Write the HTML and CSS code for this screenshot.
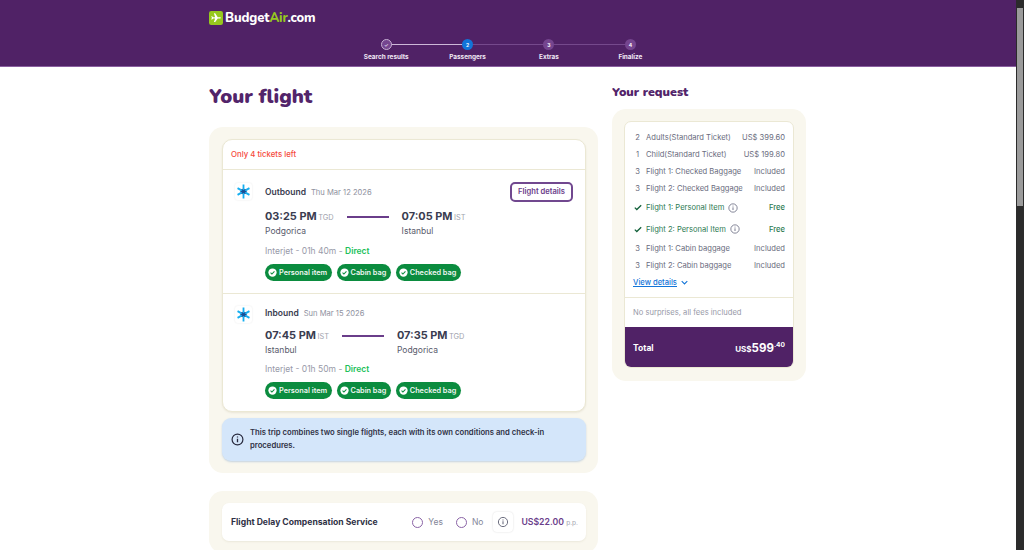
FILE: index.html
```html
<!DOCTYPE html>
<html lang="en">
<head>
   <meta charset="UTF-8">
   <meta name="viewport" content="width=device-width, initial-scale=1.0">
   <title>Your flight</title>
   <link rel="stylesheet" href="styles.css">
</head>
<body>
   <header class="topbar">
      <div class="topbar-inner">
         <div class="logo">
            <svg class="logo-mark" viewBox="0 0 16 16" aria-hidden="true">
               <rect width="16" height="16" rx="2.5" fill="#96c81e"/>
               <path d="M2.5 7l1 0 1.3 1L7 8 5.6 3.6h1.5L10 8h2.6c.7 0 1 .4 1 .8s-.3.8-1 .8H10l-2.9 4H5.6L7 9.6l-2.2 0-1.3 1h-1l.8-1.8z" fill="#fff" transform="translate(0 -1)"/>
            </svg>
            <span>Budget<em>Air</em>.com</span>
         </div>
         <ol class="steps">
            <li class="step done"><span class="dot">&#10003;</span>Search results</li>
            <li class="step current"><span class="dot">2</span>Passengers</li>
            <li class="step"><span class="dot">3</span>Extras</li>
            <li class="step"><span class="dot">4</span>Finalize</li>
         </ol>
      </div>
   </header>

   <main class="page">
      <section class="left-col">
         <h1>Your flight</h1>
         <div class="panel">
            <div class="flight-card">
               <p class="tickets-left">Only 4 tickets left</p>

               <div class="leg">
                  <div class="airline-logo">
                     <svg viewBox="0 0 16 16" aria-hidden="true">
                        <path d="M8 1.5v13M2.4 4.8l11.2 6.4M13.6 4.8L2.4 11.2" stroke="#14aef0" stroke-width="1.7" fill="none"/>
                        <path d="M5 8h6M6.3 5.8l3.4 4.4M9.7 5.8l-3.4 4.4" stroke="#1a4f96" stroke-width="1.1" fill="none"/>
                     </svg>
                  </div>
                  <div class="leg-body">
                     <div class="leg-head"><b>Outbound</b><span>Thu Mar 12 2026</span></div>
                     <div class="times">
                        <div class="stop">
                           <div class="time">03:25 PM <small>TGD</small></div>
                           <div class="city">Podgorica</div>
                        </div>
                        <div class="route-line"></div>
                        <div class="stop">
                           <div class="time">07:05 PM <small>IST</small></div>
                           <div class="city">Istanbul</div>
                        </div>
                     </div>
                     <p class="carrier">Interjet - 01h 40m - <b>Direct</b></p>
                     <div class="bags">
                        <span class="bag"><svg viewBox="0 0 12 12"><circle cx="6" cy="6" r="5.5" fill="#fff"/><path d="M3.4 6.2l1.8 1.8 3.4-3.6" stroke="#0b8c3f" stroke-width="1.4" fill="none"/></svg>Personal item</span>
                        <span class="bag"><svg viewBox="0 0 12 12"><circle cx="6" cy="6" r="5.5" fill="#fff"/><path d="M3.4 6.2l1.8 1.8 3.4-3.6" stroke="#0b8c3f" stroke-width="1.4" fill="none"/></svg>Cabin bag</span>
                        <span class="bag"><svg viewBox="0 0 12 12"><circle cx="6" cy="6" r="5.5" fill="#fff"/><path d="M3.4 6.2l1.8 1.8 3.4-3.6" stroke="#0b8c3f" stroke-width="1.4" fill="none"/></svg>Checked bag</span>
                     </div>
                  </div>
                  <a class="details-btn" href="#">Flight details</a>
               </div>

               <div class="leg leg-last">
                  <div class="airline-logo">
                     <svg viewBox="0 0 16 16" aria-hidden="true">
                        <path d="M8 1.5v13M2.4 4.8l11.2 6.4M13.6 4.8L2.4 11.2" stroke="#14aef0" stroke-width="1.7" fill="none"/>
                        <path d="M5 8h6M6.3 5.8l3.4 4.4M9.7 5.8l-3.4 4.4" stroke="#1a4f96" stroke-width="1.1" fill="none"/>
                     </svg>
                  </div>
                  <div class="leg-body">
                     <div class="leg-head"><b>Inbound</b><span>Sun Mar 15 2026</span></div>
                     <div class="times">
                        <div class="stop">
                           <div class="time">07:45 PM <small>IST</small></div>
                           <div class="city">Istanbul</div>
                        </div>
                        <div class="route-line"></div>
                        <div class="stop">
                           <div class="time">07:35 PM <small>TGD</small></div>
                           <div class="city">Podgorica</div>
                        </div>
                     </div>
                     <p class="carrier">Interjet - 01h 50m - <b>Direct</b></p>
                     <div class="bags">
                        <span class="bag"><svg viewBox="0 0 12 12"><circle cx="6" cy="6" r="5.5" fill="#fff"/><path d="M3.4 6.2l1.8 1.8 3.4-3.6" stroke="#0b8c3f" stroke-width="1.4" fill="none"/></svg>Personal item</span>
                        <span class="bag"><svg viewBox="0 0 12 12"><circle cx="6" cy="6" r="5.5" fill="#fff"/><path d="M3.4 6.2l1.8 1.8 3.4-3.6" stroke="#0b8c3f" stroke-width="1.4" fill="none"/></svg>Cabin bag</span>
                        <span class="bag"><svg viewBox="0 0 12 12"><circle cx="6" cy="6" r="5.5" fill="#fff"/><path d="M3.4 6.2l1.8 1.8 3.4-3.6" stroke="#0b8c3f" stroke-width="1.4" fill="none"/></svg>Checked bag</span>
                     </div>
                  </div>
               </div>
            </div>

            <div class="notice">
               <svg class="info-dark" viewBox="0 0 12 12"><circle cx="6" cy="6" r="5" fill="none" stroke="#27293d" stroke-width="1.1"/><path d="M6 5.2v3.4M6 3.2v1" stroke="#27293d" stroke-width="1.2"/></svg>
               <p>This trip combines two single flights, each with its own conditions and check-in procedures.</p>
            </div>
         </div>

         <div class="panel panel-service">
            <div class="service">
               <b class="service-name">Flight Delay Compensation Service</b>
               <label class="radio"><i></i>Yes</label>
               <label class="radio"><i></i>No</label>
               <span class="info-tile"><svg viewBox="0 0 12 12"><circle cx="6" cy="6" r="4.6" fill="none" stroke="#6d6f80" stroke-width="1"/><path d="M6 5.2v3M6 3.4v1" stroke="#6d6f80" stroke-width="1.1"/></svg></span>
               <span class="service-price">US$22.00 <small>p.p.</small></span>
            </div>
         </div>
      </section>

      <aside class="right-col">
         <h2>Your request</h2>
         <div class="panel panel-request">
            <div class="request-card">
               <ul class="lines">
                  <li><span class="qty">2</span><span class="what">Adults(Standard Ticket)</span><span class="amt">US$ 399.60</span></li>
                  <li><span class="qty">1</span><span class="what">Child(Standard Ticket)</span><span class="amt">US$ 199.80</span></li>
                  <li><span class="qty">3</span><span class="what">Flight 1: Checked Baggage</span><span class="amt">Included</span></li>
                  <li><span class="qty">3</span><span class="what">Flight 2: Checked Baggage</span><span class="amt">Included</span></li>
                  <li class="free"><span class="qty"><svg viewBox="0 0 10 8"><path d="M1 4.2l2.5 2.4L9 1.2" stroke="#12603a" stroke-width="1.6" fill="none"/></svg></span><span class="what">Flight 1: Personal Item<svg class="info-sm" viewBox="0 0 12 12"><circle cx="6" cy="6" r="5" fill="none" stroke="#5d5f78" stroke-width=".9"/><path d="M6 5.2v3.2M6 3.2v1" stroke="#5d5f78" stroke-width="1"/></svg></span><span class="amt">Free</span></li>
                  <li class="free"><span class="qty"><svg viewBox="0 0 10 8"><path d="M1 4.2l2.5 2.4L9 1.2" stroke="#12603a" stroke-width="1.6" fill="none"/></svg></span><span class="what">Flight 2: Personal Item<svg class="info-sm" viewBox="0 0 12 12"><circle cx="6" cy="6" r="5" fill="none" stroke="#5d5f78" stroke-width=".9"/><path d="M6 5.2v3.2M6 3.2v1" stroke="#5d5f78" stroke-width="1"/></svg></span><span class="amt">Free</span></li>
                  <li><span class="qty">3</span><span class="what">Flight 1: Cabin baggage</span><span class="amt">Included</span></li>
                  <li><span class="qty">3</span><span class="what">Flight 2: Cabin baggage</span><span class="amt">Included</span></li>
               </ul>
               <a class="view-details" href="#"><u>View details</u><svg viewBox="0 0 10 6"><path d="M1 1l4 4 4-4" stroke="#1274d8" stroke-width="1.5" fill="none"/></svg></a>
               <p class="no-surprises">No surprises, all fees included</p>
               <div class="total">
                  <b>Total</b>
                  <span class="total-price"><small>US$</small>599<sup>.40</sup></span>
               </div>
            </div>
         </div>
      </aside>
   </main>

   <div class="scrollbar"><div class="scroll-thumb"></div></div>
</body>
</html>
```

FILE: styles.css
```css
* {
   box-sizing: border-box;
}
html, body {
   height: 550px;
   overflow: hidden;
}
body {
   margin: 0;
   font-family: 'Inter', 'Liberation Sans', sans-serif;
   background-color: #fff;
   color: #27293d;
}
p, h1, h2, ul, ol {
   margin: 0;
   padding: 0;
}
ul, ol {
   list-style: none;
}

/* Header */
.topbar {
   height: 67px;
   background-color: #502266;
   border-bottom: 1px solid #8a5fa0;
}
.topbar-inner {
   width: 597px;
   margin-left: 209px;
   padding-top: 10px;
}
.logo {
   display: flex;
   align-items: center;
   gap: 2px;
   height: 15px;
   font-family: 'Nunito', 'Lato', sans-serif;
   font-weight: 800;
   font-size: 13px;
   letter-spacing: -0.1px;
   color: #fff;
}
.logo em {
   font-style: normal;
   color: #96c81e;
}
.logo-mark {
   width: 14px;
   height: 14px;
}
.steps {
   display: grid;
   grid-template-columns: repeat(4, 81.4px);
   margin: 14px 0 0 136.5px;
}
.step {
   position: relative;
   display: flex;
   flex-direction: column;
   align-items: center;
   gap: 3px;
   font-size: 6.4px;
   font-weight: 700;
   color: #f1e9f5;
   white-space: nowrap;
}
.step:not(:last-child)::after {
   content: "";
   position: absolute;
   top: 5px;
   left: 50%;
   width: 100%;
   height: 1px;
   background-color: #75498c;
}
.step.done::after {
   background-color: #cdb8d8;
}
.dot {
   position: relative;
   z-index: 1;
   display: flex;
   align-items: center;
   justify-content: center;
   width: 11px;
   height: 11px;
   border-radius: 50%;
   background-color: #75458f;
   font-size: 5px;
   color: #fff;
}
.step.done .dot {
   border: 1px solid #c5aed2;
   color: #d9c9e2;
}
.step.current .dot {
   background-color: #1274d8;
}

/* Columns */
.page {
   display: flex;
   gap: 14px;
   width: 597px;
   margin-left: 209px;
}
.left-col {
   width: 389px;
}
.right-col {
   width: 194px;
}
h1 {
   font-family: 'Nunito', 'Lato', sans-serif;
   font-size: 20px;
   font-weight: 900;
   line-height: 28px;
   color: #52246a;
   margin: 16px 0 16px;
}
h2 {
   font-family: 'Nunito', 'Lato', sans-serif;
   font-size: 12.4px;
   font-weight: 900;
   line-height: 16px;
   color: #52246a;
   margin: 17px 0 9px;
}
.panel {
   background-color: #f9f7ee;
   border-radius: 14px;
   padding: 12px 12px 12px 13px;
}

/* Flight card */
.flight-card {
   background-color: #fff;
   border: 1px solid #ebe8d4;
   border-radius: 10px;
   box-shadow: 0 1px 2px rgba(120, 110, 60, 0.12);
}
.tickets-left {
   height: 30px;
   line-height: 29px;
   padding-left: 8px;
   font-size: 7.8px;
   font-weight: 500;
   color: #f5483b;
   border-bottom: 1px solid #ebe8d4;
}
.leg {
   display: flex;
   align-items: flex-start;
   height: 124px;
   padding: 12px 12px 0 12px;
   border-bottom: 1px solid #ebe8d4;
}
.leg-last {
   height: 117px;
   padding-top: 9px;
   border-bottom: none;
}
.airline-logo {
   flex: none;
   width: 17px;
   height: 17px;
   margin: 1px 13px 0 0;
   border-radius: 3px;
   box-shadow: 0 0 2px rgba(0, 0, 0, 0.1);
}
.leg-last .airline-logo {
   margin-top: 3px;
}
.airline-logo svg {
   display: block;
   width: 17px;
   height: 17px;
}
.leg-body {
   flex: 1;
}
.leg-head {
   display: flex;
   align-items: baseline;
   gap: 5px;
   padding-top: 4px;
   font-size: 8.5px;
   line-height: 12px;
}
.leg-head b {
   font-weight: 600;
   color: #3a3c50;
}
.leg-head span {
   font-size: 7.6px;
   color: #8f92a0;
}
.times {
   display: flex;
   margin-top: 9px;
   gap: 13px;
}
.leg-last .times {
   margin-top: 7px;
}
.route-line {
   width: 42px;
   height: 1.5px;
   margin-top: 8px;
   background-color: #6a3d8a;
}
.time {
   font-size: 10.9px;
   font-weight: 700;
   line-height: 16px;
   color: #3a3c50;
   white-space: nowrap;
}
.time small {
   margin-left: -1px;
   font-size: 7.4px;
   font-weight: 400;
   color: #a1a3ae;
}
.city {
   font-size: 8.5px;
   line-height: 12px;
   margin-top: -1px;
   color: #585a6c;
}
.carrier {
   margin-top: 8px;
   font-size: 8.5px;
   line-height: 12px;
   color: #989aa8;
}
.leg-last .carrier {
   margin-top: 7px;
}
.carrier b {
   font-weight: 600;
   color: #22bf5a;
}
.bags {
   display: flex;
   gap: 5px;
   margin-top: 7px;
}
.bag {
   display: inline-flex;
   align-items: center;
   gap: 2px;
   height: 17px;
   padding: 0 4.5px 0 3px;
   border-radius: 9px;
   background-color: #0b8c3f;
   color: #f1f7f3;
   font-size: 7.3px;
   font-weight: 600;
   white-space: nowrap;
}
.bag svg {
   width: 9px;
   height: 9px;
}
.details-btn {
   flex: none;
   width: 63px;
   height: 20px;
   line-height: 16px;
   text-align: center;
   border: 2px solid #71488f;
   border-radius: 5px;
   font-size: 7.6px;
   font-weight: 600;
   color: #6a3d8a;
   text-decoration: none;
}
.notice {
   display: flex;
   align-items: center;
   gap: 6px;
   height: 43px;
   margin-top: 6px;
   padding: 0 9px;
   border-radius: 9px;
   background-color: #d4e6fa;
   box-shadow: 0 1px 2px rgba(80, 130, 190, 0.3);
   font-size: 7.7px;
   font-weight: 600;
   line-height: 13px;
   color: #2f3145;
}
.notice p {
   margin-top: -1px;
}
.info-dark {
   flex: none;
   width: 13px;
   height: 13px;
}

/* Delay service */
.panel-service {
   margin-top: 18px;
   padding-bottom: 12px;
}
.service {
   display: flex;
   align-items: center;
   height: 38px;
   padding: 0 8px 0 9px;
   background-color: #fff;
   border-radius: 7px;
   box-shadow: 0 1px 2px rgba(120, 110, 60, 0.1);
}
.service-name {
   flex: 1;
   font-size: 8.6px;
   font-weight: 700;
   color: #2f3145;
}
.radio {
   display: flex;
   align-items: center;
   gap: 5px;
   margin-right: 13px;
   font-size: 8.5px;
   color: #85879a;
}
.radio i {
   display: block;
   width: 11px;
   height: 11px;
   border: 1px solid #8a63a6;
   border-radius: 50%;
}
.info-tile {
   display: flex;
   align-items: center;
   justify-content: center;
   width: 20px;
   height: 20px;
   margin-right: 8px;
   margin-left: -3px;
   border-radius: 4px;
   box-shadow: 0 0 2px rgba(0, 0, 0, 0.15);
}
.info-tile svg {
   width: 12px;
   height: 12px;
}
.service-price {
   font-size: 8.7px;
   font-weight: 600;
   color: #6a3d8a;
   white-space: nowrap;
}
.service-price small {
   font-size: 6.6px;
   font-weight: 400;
   color: #a1a3ae;
}

/* Request summary */
.panel-request {
   padding: 12px;
   height: 272px;
}
.request-card {
   overflow: hidden;
   height: 247px;
   background-color: #fff;
   border: 1px solid #ebe8d4;
   border-radius: 7px;
}
.lines {
   padding: 7px 8px 0 8px;
}
.lines li {
   display: flex;
   align-items: center;
   height: 17px;
   font-size: 7.6px;
   color: #6a6c7e;
}
.lines li.free {
   height: 21.5px;
   color: #2d7a52;
}
.qty {
   flex: none;
   display: flex;
   justify-content: center;
   width: 9px;
   margin-right: 4px;
}
.qty svg {
   width: 8px;
   height: 7px;
}
.what {
   flex: 1;
   display: flex;
   align-items: center;
   white-space: nowrap;
}
.amt {
   white-space: nowrap;
}
.free .amt {
   font-weight: 500;
}
.info-sm {
   width: 10px;
   height: 10px;
   margin-left: 4px;
}
.view-details {
   display: flex;
   align-items: center;
   gap: 4px;
   margin: 0 8px;
   height: 17px;
   font-size: 7.6px;
   font-weight: 500;
   color: #1274d8;
}
.view-details svg {
   width: 7px;
   height: 5px;
}
.no-surprises {
   height: 30px;
   margin-top: 6px;
   padding-left: 8px;
   line-height: 29px;
   border-top: 1px solid #ebe8d4;
   font-size: 7.6px;
   color: #989aa8;
}
.total {
   display: flex;
   align-items: center;
   justify-content: space-between;
   height: 41px;
   padding: 0 8px;
   background-color: #502266;
   color: #fff;
}
.total b {
   font-size: 8.5px;
}
.total-price {
   font-size: 11.5px;
   font-weight: 700;
}
.total-price small {
   font-size: 8px;
}
.total-price sup {
   font-size: 6.6px;
   line-height: 0;
}

/* Scrollbar */
.scrollbar {
   position: fixed;
   top: 0;
   right: 0;
   width: 8px;
   height: 550px;
   padding-top: 8px;
   background-color: #2b2b2b;
}
.scroll-thumb {
   width: 6px;
   height: 198px;
   margin-left: 1px;
   background-color: #9b9b9b;
}
```
